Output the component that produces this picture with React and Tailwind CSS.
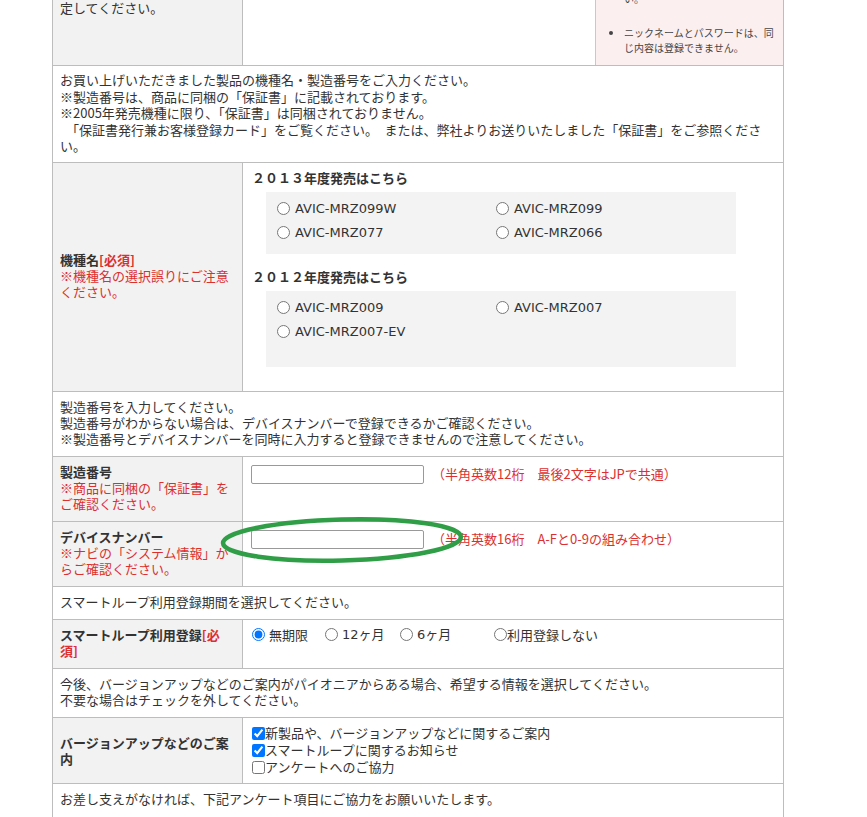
import React from 'react';

const jp = "font-['Noto_Sans_CJK_JP',sans-serif]";
const wide = "font-['DejaVu_Sans','Noto_Sans_CJK_JP',sans-serif]";

// vertical padding is passed per cell so utilities never fight each other
const labelCell = 'bg-[#f2f2f2] border border-[#bdbdbd] pl-[7px] pr-2 text-left';
const valueCell = 'bg-white border border-[#bdbdbd] pl-2 pr-2 text-left align-top';
const noteCell = 'bg-white border border-[#bdbdbd] pl-[7px] pr-1 text-left';
const pad = 'pt-[7px] pb-[9px]';
const red = 'text-[#dc2f2f]';

// one fixed-height line per entry so mixed glyphs can't stretch the rows
const Line = ({ children, className = 'h-4' }) => (
  <div className={`whitespace-nowrap ${className}`}>{children}</div>
);

const Radio = ({ label }) => (
  <label className="flex items-center h-6">
    <input type="radio" className="m-0 w-[13px] h-[13px]" />
    <span className={`ml-[5px] ${wide}`}>{label}</span>
  </label>
);

const ModelBox = ({ items, className }) => (
  <div className={`w-[470px] ml-[15px] bg-[#f3f3f3] grid grid-cols-[219px_219px] pl-[11px] pt-[5px] ${className}`}>
    {items.map((m) => (
      <Radio key={m} label={m} />
    ))}
  </div>
);

const DeviceInput = ({ note }) => (
  <div className="flex items-center">
    <input type="text" className="w-[173px] h-[19px] border border-[#999] rounded-[2px] bg-white" />
    <span className={`ml-2 ${red}`}>{note}</span>
  </div>
);

export default function App() {
  return (
    <div className={`relative flow-root min-h-screen bg-white text-[13px] leading-4 text-[#333] ${jp}`}>
      <table className="table-fixed border-collapse w-[732px] ml-[52px] -mt-[40px]">
        <colgroup>
          <col className="w-[190px]" />
          <col />
        </colgroup>
        <tbody>
          {/* top row, cut off by the window */}
          <tr>
            <td className={`${labelCell} ${pad} align-top`}>
              <Line className="h-4 font-bold">パスワード</Line>
              <Line>※半角英数字4～8文字で設</Line>
              <Line>定してください。</Line>
            </td>
            <td className="bg-white border border-[#bdbdbd] p-0 align-top">
              <div className="flex h-[104px]">
                <div className="flex-1" />
                <div className="w-[188px] bg-[#fcefef] border-l border-[#c8c8c8] flex flex-col justify-end pb-[10px] text-[10px] leading-[15px] text-[#444]">
                  <ul className="list-disc pl-[28px] whitespace-nowrap">
                    <li className="mb-[19px]">
                      英字と数字を組み合わせて設定
                      <br />
                      してください。大文字と小文字
                      <br />
                      は区別されますのでご注意くださ
                      <br />
                      い。
                    </li>
                    <li>
                      ニックネームとパスワードは、同
                      <br />
                      じ内容は登録できません。
                    </li>
                  </ul>
                </div>
              </div>
            </td>
          </tr>

          <tr>
            <td colSpan={2} className={`${noteCell} pt-[6px] pb-[7px]`}>
              <Line className="h-[16.5px]">お買い上げいただきました製品の機種名・製造番号をご入力ください。</Line>
              <Line className="h-[16.5px]">※製造番号は、商品に同梱の「保証書」に記載されております。</Line>
              <Line className="h-[16.5px]">※2005年発売機種に限り、「保証書」は同梱されておりません。</Line>
              <Line className="h-[16.5px]">
                <span className="inline-block w-[6px]" />
                「保証書発行兼お客様登録カード」をご覧ください。{'\u3000'}または、弊社よりお送りいたしました「保証書」をご参照くださ
              </Line>
              <Line className="h-[16.5px]">い。</Line>
            </td>
          </tr>

          <tr>
            <td className={`${labelCell} ${pad} align-middle`}>
              <Line className="h-4 font-bold">
                機種名<span className={red}>[必須]</span>
              </Line>
              <Line className={`h-4 ${red}`}>※機種名の選択誤りにご注意</Line>
              <Line className={`h-4 ${red}`}>ください。</Line>
            </td>
            <td className={`${valueCell} ${pad}`}>
              <Line className="h-4 font-bold mb-[6px] pl-px">２０１３年度発売はこちら</Line>
              <ModelBox
                className="pb-[9px] mb-[15px]"
                items={['AVIC-MRZ099W', 'AVIC-MRZ099', 'AVIC-MRZ077', 'AVIC-MRZ066']}
              />
              <Line className="h-4 font-bold mb-[6px] pl-px">２０１２年度発売はこちら</Line>
              <ModelBox
                className="pb-[23px] mb-[15px]"
                items={['AVIC-MRZ009', 'AVIC-MRZ007', 'AVIC-MRZ007-EV']}
              />
            </td>
          </tr>

          <tr>
            <td colSpan={2} className={`${noteCell} ${pad}`}>
              <Line>製造番号を入力してください。</Line>
              <Line>製造番号がわからない場合は、デバイスナンバーで登録できるかご確認ください。</Line>
              <Line>※製造番号とデバイスナンバーを同時に入力すると登録できませんので注意してください。</Line>
            </td>
          </tr>

          <tr>
            <td className={`${labelCell} ${pad} align-top`}>
              <Line className="h-4 font-bold">製造番号</Line>
              <Line className={`h-4 ${red}`}>※商品に同梱の「保証書」を</Line>
              <Line className={`h-4 ${red}`}>ご確認ください。</Line>
            </td>
            <td className={`${valueCell} pt-2 pb-2`}>
              <DeviceInput note="（半角英数12桁　最後2文字はJPで共通）" />
            </td>
          </tr>

          <tr>
            <td className={`${labelCell} ${pad} align-top`}>
              <Line className="h-4 font-bold">デバイスナンバー</Line>
              <Line className={`h-4 ${red}`}>※ナビの「システム情報」か</Line>
              <Line className={`h-4 ${red}`}>らご確認ください。</Line>
            </td>
            <td className={`${valueCell} pt-2 pb-2`}>
              <DeviceInput note="（半角英数16桁　A-Fと0-9の組み合わせ）" />
            </td>
          </tr>

          <tr>
            <td colSpan={2} className={`${noteCell} ${pad}`}>
              <Line>スマートループ利用登録期間を選択してください。</Line>
            </td>
          </tr>

          <tr>
            <td className={`${labelCell} ${pad} align-top`}>
              <Line className="h-4 font-bold">
                スマートループ利用登録<span className={red}>[必</span>
              </Line>
              <Line className={`h-4 font-bold ${red}`}>須]</Line>
            </td>
            <td className={`${valueCell} ${pad}`}>
              <div className="flex items-center h-4">
                <label className="flex items-center w-[74px] pl-px">
                  <input type="radio" name="loop" defaultChecked className="m-0 w-[13px] h-[13px]" />
                  <span className="ml-1">無期限</span>
                </label>
                <label className="flex items-center w-[75px]">
                  <input type="radio" name="loop" className="m-0 w-[13px] h-[13px]" />
                  <span className={`ml-1 ${wide}`}>12ヶ月</span>
                </label>
                <label className="flex items-center w-[94px]">
                  <input type="radio" name="loop" className="m-0 w-[13px] h-[13px]" />
                  <span className={`ml-1 ${wide}`}>6ヶ月</span>
                </label>
                <label className="flex items-center">
                  <input type="radio" name="loop" className="m-0 w-[13px] h-[13px]" />
                  <span>利用登録しない</span>
                </label>
              </div>
            </td>
          </tr>

          <tr>
            <td colSpan={2} className={`${noteCell} ${pad}`}>
              <Line>今後、バージョンアップなどのご案内がパイオニアからある場合、希望する情報を選択してください。</Line>
              <Line>不要な場合はチェックを外してください。</Line>
            </td>
          </tr>

          <tr>
            <td className={`${labelCell} pt-[9px] pb-[7px] align-middle`}>
              <Line className="h-4 font-bold">バージョンアップなどのご案</Line>
              <Line className="h-4 font-bold">内</Line>
            </td>
            <td className={`${valueCell} pt-[7px] pb-[7px]`}>
              {[
                ['新製品や、バージョンアップなどに関するご案内', true],
                ['スマートループに関するお知らせ', true],
                ['アンケートへのご協力', false],
              ].map(([text, on]) => (
                <label key={text} className="flex items-center h-[17px]">
                  <input type="checkbox" defaultChecked={on} className="m-0 ml-px w-[13px] h-[13px]" />
                  <span>{text}</span>
                </label>
              ))}
            </td>
          </tr>

          <tr>
            <td colSpan={2} className={`${noteCell} pt-[7px] pb-[14px]`}>
              <Line>お差し支えがなければ、下記アンケート項目にご協力をお願いいたします。</Line>
            </td>
          </tr>
        </tbody>
      </table>

      {/* hand-drawn marker around the device number field */}
      <svg
        className="absolute left-[216px] top-[513px] w-[254px] h-[54px] pointer-events-none"
        viewBox="0 0 254 54"
      >
        <ellipse
          cx="126"
          cy="27"
          rx="119"
          ry="20.5"
          fill="none"
          stroke="#2f9e47"
          strokeWidth="4.5"
          transform="rotate(-1.5 126 27)"
        />
      </svg>
    </div>
  );
}
